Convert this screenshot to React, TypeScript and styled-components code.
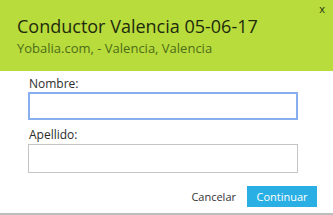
import React from 'react'
import styled, { createGlobalStyle } from 'styled-components'

const GlobalStyle = createGlobalStyle`
  html, body {
    margin: 0;
    padding: 0;
    background: #fff;
    font-family: "Open Sans", "Liberation Sans", sans-serif;
  }
`

const Dialog = styled.div`
  width: 333px;
  height: 215px;
  box-sizing: border-box;
  border-bottom: 2px solid #bdbdbd;
  background: #fff;
  display: flex;
  flex-direction: column;
`

const Header = styled.div`
  position: relative;
  height: 71px;
  box-sizing: border-box;
  background: #b8dc3c;
  padding: 14px 17px 0;
`

const Title = styled.h1`
  margin: 0;
  font-size: 18px;
  font-weight: 400;
  line-height: 24px;
  color: #1e2a0c;
`

const Subtitle = styled.div`
  margin-top: 1px;
  font-size: 13px;
  line-height: 18px;
  color: #4d6d18;
`

const Close = styled.button`
  position: absolute;
  top: 1px;
  right: 8px;
  border: 0;
  background: none;
  padding: 0;
  font-family: inherit;
  font-size: 11px;
  color: #263010;
  cursor: pointer;
`

const Form = styled.form`
  display: flex;
  flex-direction: column;
  padding: 4px 35px 0 28px;
`

const Label = styled.label<{ $first?: boolean }>`
  font-size: 12px;
  line-height: 17px;
  color: #2c2c2c;
  padding-left: 1px;
  margin-top: ${props => (props.$first ? '0' : '6px')};
`

const Input = styled.input<{ $focused?: boolean }>`
  box-sizing: border-box;
  width: 270px;
  height: ${props => (props.$focused ? '28px' : '29px')};
  margin-top: ${props => (props.$focused ? '0' : '1px')};
  border: ${props => (props.$focused ? '2px solid #89b0ee' : '1px solid #c4c4c4')};
  background: #fff;
  outline: none;
  font-family: inherit;
  font-size: 12px;
  padding: 0 6px;
`

const Actions = styled.div`
  display: flex;
  justify-content: flex-end;
  align-items: center;
  gap: 11px;
  padding: 13px 16px 0 0;
`

const LinkButton = styled.button`
  border: 0;
  background: none;
  padding: 0;
  font-family: inherit;
  font-size: 11px;
  color: #333;
  cursor: pointer;
`

const PrimaryButton = styled.button`
  width: 70px;
  height: 21px;
  border: 0;
  background: #2aafe4;
  color: #fff;
  font-family: inherit;
  font-size: 11px;
  cursor: pointer;
`

export default function App() {
  return (
    <>
      <GlobalStyle />
      <Dialog>
        <Header>
          <Title>Conductor Valencia 05-06-17</Title>
          <Subtitle>Yobalia.com, - Valencia, Valencia</Subtitle>
          <Close>x</Close>
        </Header>
        <Form onSubmit={e => e.preventDefault()}>
          <Label $first htmlFor="nombre">Nombre:</Label>
          <Input id="nombre" $focused />
          <Label htmlFor="apellido">Apellido:</Label>
          <Input id="apellido" />
        </Form>
        <Actions>
          <LinkButton>Cancelar</LinkButton>
          <PrimaryButton>Continuar</PrimaryButton>
        </Actions>
      </Dialog>
    </>
  )
}
